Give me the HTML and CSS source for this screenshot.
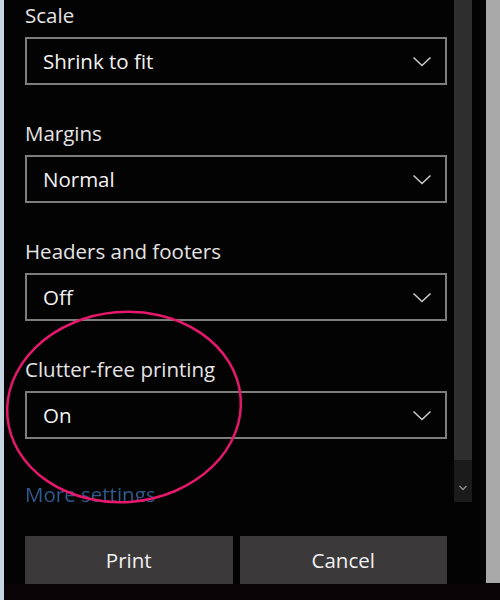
FILE: index.html
```html
<!DOCTYPE html>
<html lang="en">
<head>
    <meta charset="UTF-8">
    <meta name="viewport" content="width=device-width, initial-scale=1.0">
    <title>Print</title>
    <link rel="stylesheet" href="styles.css">
</head>
<body>
    <div class="window">
        <div class="edge"></div>
        <div class="panel">
            <div class="viewport">
                <div class="settings">
                    <div class="group">
                        <div class="label">Scale</div>
                        <div class="select">
                            <span>Shrink to fit</span>
                            <svg class="chevron" width="20" height="11" viewBox="0 0 20 11"><path d="M1.5 1.5 L10 9.5 L18.5 1.5" /></svg>
                        </div>
                    </div>
                    <div class="group">
                        <div class="label">Margins</div>
                        <div class="select">
                            <span>Normal</span>
                            <svg class="chevron" width="20" height="11" viewBox="0 0 20 11"><path d="M1.5 1.5 L10 9.5 L18.5 1.5" /></svg>
                        </div>
                    </div>
                    <div class="group">
                        <div class="label">Headers and footers</div>
                        <div class="select">
                            <span>Off</span>
                            <svg class="chevron" width="20" height="11" viewBox="0 0 20 11"><path d="M1.5 1.5 L10 9.5 L18.5 1.5" /></svg>
                        </div>
                    </div>
                    <div class="group">
                        <div class="label">Clutter-free printing</div>
                        <div class="select">
                            <span>On</span>
                            <svg class="chevron" width="20" height="11" viewBox="0 0 20 11"><path d="M1.5 1.5 L10 9.5 L18.5 1.5" /></svg>
                        </div>
                    </div>
                    <a class="more" href="#">More settings</a>
                </div>
                <div class="scrollbar">
                    <div class="track"></div>
                    <div class="arrow">
                        <svg width="8" height="6" viewBox="0 0 8 6"><path d="M0.5 1 L4 4.5 L7.5 1" /></svg>
                    </div>
                </div>
            </div>
            <div class="actions">
                <button class="btn">Print</button>
                <button class="btn">Cancel</button>
            </div>
        </div>
        <div class="gutter"></div>
    </div>

    <!-- highlight drawn over the screenshot -->
    <svg class="annotation" width="500" height="600" viewBox="0 0 500 600">
        <ellipse cx="124" cy="407" rx="117" ry="95" transform="rotate(-5 124 407)" />
    </svg>
</body>
</html>
```

FILE: styles.css
```css
/* General Styles */
body {
    margin: 0;
    background: #080406;
    font-family: "Open Sans", "Noto Sans", sans-serif;
    color: #e8e8e8;
    width: 500px;
    height: 600px;
    overflow: hidden;
}

.window {
    display: flex;
    height: 584px;
    background: #040304;
}

.edge {
    width: 4px;
    height: 600px;
    background: #c6d6e0;
}

.panel {
    width: 482px;
    display: flex;
    flex-direction: column;
}

.viewport {
    height: 502px;
    display: flex;
    overflow: hidden;
}

.settings {
    width: 422px;
    padding-left: 21px;
}

.group {
    margin-bottom: 33px;
}

.label {
    font-size: 20.5px;
    line-height: 30px;
    height: 30px;
    margin-bottom: 7px;
    color: #e4e4e4;
}

.select {
    height: 44px;
    border: 2px solid #7d7d7d;
    display: flex;
    align-items: center;
    justify-content: space-between;
    padding: 0 13px 0 16px;
    font-size: 20.5px;
    color: #f2f2f2;
}

.chevron path {
    fill: none;
    stroke: #c9c9c9;
    stroke-width: 1.6;
}

.more {
    display: block;
    margin-top: 41px;
    font-size: 20.5px;
    line-height: 28px;
    color: #2f5a8c;
    text-decoration: none;
    filter: blur(0.6px);
}

/* Scrollbar */
.scrollbar {
    margin-left: 7px;
    width: 18px;
    display: flex;
    flex-direction: column;
}

.track {
    height: 460px;
    background: #2f2e2f;
}

.arrow {
    flex: 1;
    background: #1c1b1c;
    display: flex;
    justify-content: center;
    padding-top: 25px;
}

.arrow svg path {
    fill: none;
    stroke: #8a8a8a;
    stroke-width: 1.5;
}

/* Buttons */
.actions {
    margin-top: 34px;
    width: 422px;
    margin-left: 21px;
    display: flex;
    gap: 7px;
}

.btn {
    flex: 1;
    height: 48px;
    border: none;
    background: #3b393a;
    color: #f0f0f0;
    font-family: "Open Sans", "Noto Sans", sans-serif;
    font-size: 20.5px;
    padding: 0;
}

.gutter {
    width: 14px;
    height: 583px;
    margin-left: auto;
    background: #a9a9a9;
}

.annotation {
    position: absolute;
    left: 0;
    top: 0;
    pointer-events: none;
}

.annotation ellipse {
    fill: none;
    stroke: #e6186b;
    stroke-width: 2.5;
}
```
